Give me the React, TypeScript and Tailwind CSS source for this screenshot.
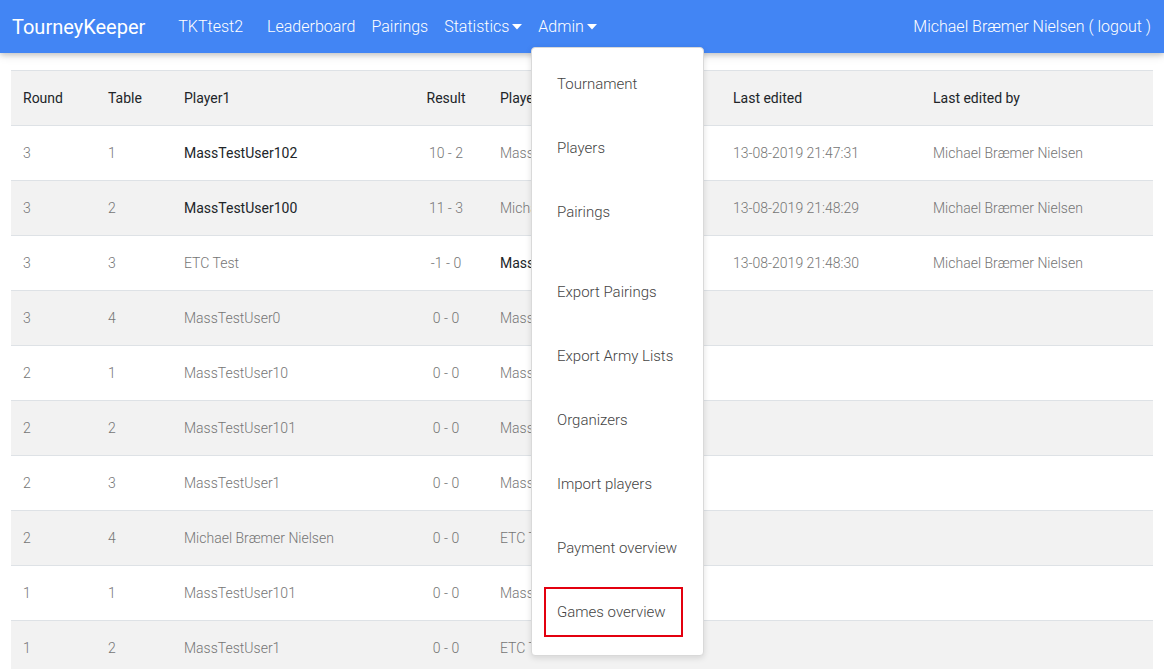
import { useState } from "react";

interface Game {
  round: number;
  table: number;
  player1: string;
  result: string;
  player2: string;
  p1Strong?: boolean;
  p2Strong?: boolean;
  edited?: string;
  editedBy?: string;
}

const games: Game[] = [
  { round: 3, table: 1, player1: "MassTestUser102", result: "10 - 2", player2: "MassTestUser1", p1Strong: true, edited: "13-08-2019 21:47:31", editedBy: "Michael Bræmer Nielsen" },
  { round: 3, table: 2, player1: "MassTestUser100", result: "11 - 3", player2: "Michael Bræmer", p1Strong: true, edited: "13-08-2019 21:48:29", editedBy: "Michael Bræmer Nielsen" },
  { round: 3, table: 3, player1: "ETC Test", result: "-1 - 0", player2: "MassTestUser0", p2Strong: true, edited: "13-08-2019 21:48:30", editedBy: "Michael Bræmer Nielsen" },
  { round: 3, table: 4, player1: "MassTestUser0", result: "0 - 0", player2: "MassTestUser100" },
  { round: 2, table: 1, player1: "MassTestUser10", result: "0 - 0", player2: "MassTestUser102" },
  { round: 2, table: 2, player1: "MassTestUser101", result: "0 - 0", player2: "MassTestUser0" },
  { round: 2, table: 3, player1: "MassTestUser1", result: "0 - 0", player2: "MassTestUser100" },
  { round: 2, table: 4, player1: "Michael Bræmer Nielsen", result: "0 - 0", player2: "ETC Test" },
  { round: 1, table: 1, player1: "MassTestUser101", result: "0 - 0", player2: "MassTestUser10" },
  { round: 1, table: 2, player1: "MassTestUser1", result: "0 - 0", player2: "ETC Test" },
];

const adminItems = [
  "Tournament",
  "Players",
  "Pairings",
  "-",
  "Export Pairings",
  "Export Army Lists",
  "Organizers",
  "Import players",
  "Payment overview",
  "Games overview",
];

function Caret() {
  return (
    <svg width="10" height="6" viewBox="0 0 10 6" className="ml-[3px] mt-[1px]">
      <path d="M0 0 L10 0 L5 5.5 Z" fill="white" />
    </svg>
  );
}

export default function App() {
  const [adminOpen] = useState(true);

  return (
    <div className="relative w-[1164px] h-[669px] overflow-hidden bg-white font-['Roboto',sans-serif]">
      {/* Navbar */}
      <div className="relative z-10 h-[53px] bg-[#4285f4] shadow-[0_2px_5px_rgba(0,0,0,0.16),0_2px_10px_rgba(0,0,0,0.12)] flex items-center px-3 text-white">
        <span className="text-[20px] leading-none mr-[33px]">TourneyKeeper</span>
        <span className="text-[16px] font-light mr-[24px]">TKTtest2</span>
        <span className="text-[16px] font-light mr-[16px]">Leaderboard</span>
        <span className="text-[16px] font-light mr-[16px]">Pairings</span>
        <span className="text-[16px] font-light mr-[16px] flex items-center">
          Statistics
          <Caret />
        </span>
        <span className="text-[16px] font-light flex items-center">
          Admin
          <Caret />
        </span>
        <span className="ml-auto text-[16px] font-light mr-[1px]">Michael Bræmer Nielsen ( logout )</span>
      </div>

      {/* Games table */}
      <div className="pt-[17px] px-[11px]">
        <div className="w-[1142px] text-[14px]">
          <div className="flex h-[56px] items-center bg-[#f2f2f2] border-t border-b border-[#dee2e6] text-[#212529]">
            <div className="w-[85px] pl-3">Round</div>
            <div className="w-[76px] pl-3">Table</div>
            <div className="w-[238px] pl-3">Player1</div>
            <div className="w-[78px] pl-3 pr-[18px] text-center">Result</div>
            <div className="w-[233px] pl-3">Player2</div>
            <div className="w-[200px] pl-3">Last edited</div>
            <div className="flex-1 pl-3">Last edited by</div>
          </div>
          {games.map((g, i) => (
            <div
              key={i}
              className={
                "flex h-[55px] items-center border-b border-[#dee2e6] font-light text-[#757575] " +
                (i % 2 === 1 ? "bg-[#f2f2f2]" : "bg-white")
              }
            >
              <div className="w-[85px] pl-3">{g.round}</div>
              <div className="w-[76px] pl-3">{g.table}</div>
              <div className={"w-[238px] pl-3 " + (g.p1Strong ? "font-normal text-[#212529]" : "")}>{g.player1}</div>
              <div className="w-[78px] pl-3 pr-[18px] text-center">{g.result}</div>
              <div className={"w-[233px] pl-3 whitespace-nowrap " + (g.p2Strong ? "font-normal text-[#212529]" : "")}>{g.player2}</div>
              <div className="w-[200px] pl-3">{g.edited}</div>
              <div className="flex-1 pl-3">{g.editedBy}</div>
            </div>
          ))}
        </div>
      </div>

      {/* Admin dropdown */}
      {adminOpen && (
        <div className="absolute z-20 left-[531px] top-[47px] w-[173px] h-[609px] bg-white border border-[#d9d9d9] rounded-[4px] shadow-[0_2px_6px_rgba(0,0,0,0.12)] pt-[4px] text-[15px] font-light text-[#444]">
          {adminItems.map((item, i) =>
            item === "-" ? (
              <div key={i} className="h-[16px]" />
            ) : item === "Games overview" ? (
              <div key={i} className="h-[64px] flex items-center px-[12px]">
                <div className="w-[139px] h-[50px] border-2 border-[#e3000f] flex items-center pl-[11px]">
                  {item}
                </div>
              </div>
            ) : (
              <div key={i} className="h-[64px] flex items-center px-[25px]">
                {item}
              </div>
            )
          )}
        </div>
      )}
    </div>
  );
}
